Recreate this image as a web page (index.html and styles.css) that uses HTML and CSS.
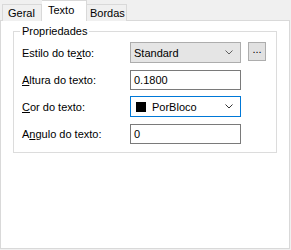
FILE: index.html
```html
<!DOCTYPE html>
<html lang="pt">
  <head>
    <meta charset="UTF-8" />
    <title>Propriedades do texto</title>
    <link rel="stylesheet" href="styles.css">
  </head>
  <body>
    <div class="tabs">
      <div class="tab">Geral</div>
      <div class="tab active">Texto</div>
      <div class="tab">Bordas</div>
    </div>
    <div class="panel">
      <fieldset class="group">
        <legend>Propriedades</legend>
        <div class="rows">
          <label class="lbl">Estilo do te<u>x</u>to:</label>
          <div class="combo">
            <span class="value">Standard</span>
            <svg class="chev" width="8" height="5" viewBox="0 0 8 5"><polyline points="0.5,0.5 4,4 7.5,0.5" fill="none" stroke="#606060" stroke-width="1"/></svg>
          </div>
          <div class="dots">...</div>

          <label class="lbl"><u>A</u>ltura do texto:</label>
          <div class="textbox">0.1800</div>
          <div></div>

          <label class="lbl"><u>C</u>or do texto:</label>
          <div class="combo color focus">
            <span class="swatch"></span>
            <span class="value">PorBloco</span>
            <svg class="chev" width="8" height="5" viewBox="0 0 8 5"><polyline points="0.5,0.5 4,4 7.5,0.5" fill="none" stroke="#333" stroke-width="1"/></svg>
          </div>
          <div></div>

          <label class="lbl">A<u>n</u>gulo do texto:</label>
          <div class="textbox">0</div>
          <div></div>
        </div>
      </fieldset>
    </div>
  </body>
</html>
```

FILE: styles.css
```css
body {
  margin: 0;
  width: 291px;
  height: 250px;
  background-color: #f0f0f0;
  font-family: "Liberation Sans", Arial, sans-serif;
  font-size: 11px;
  color: #000;
}

.tabs {
  display: flex;
  align-items: flex-end;
  height: 21px;
  padding-left: 2px;
}

.tab {
  flex: none;
  height: 17px;
  line-height: 16px;
  padding: 0 0 0 4px;
  border: 1px solid #d9d9d9;
  border-bottom: none;
  background-color: #f0f0f0;
  box-sizing: border-box;
  white-space: nowrap;
}
.tab:first-child {
  width: 40px;
  padding-left: 5px;
}
.tab:last-child {
  width: 40px;
  padding-left: 3px;
  border-left: none;
}
.tab.active {
  position: relative;
  height: 21px;
  width: 45px;
  padding-left: 6px;
  line-height: 18px;
  background-color: #fff;
  border-left: none;
  z-index: 1;
}

.panel {
  width: 290px;
  height: 229px;
  margin-top: -1px;
  box-sizing: border-box;
  border: 1px solid #d9d9d9;
  background-color: #fff;
  padding: 3px 12px 0 12px;
}

.group {
  margin: 0;
  border: 1px solid #dcdcdc;
  padding: 4px 8px 10px 8px;
  height: 129px;
  box-sizing: border-box;
}
.group legend {
  padding: 0 2px;
  margin-left: -2px;
  line-height: 14px;
}

.rows {
  display: grid;
  grid-template-columns: 101px 111px 18px;
  grid-auto-rows: 21px;
  column-gap: 7px;
  row-gap: 6px;
  align-items: center;
}

.lbl {
  white-space: nowrap;
}

.combo, .textbox {
  height: 21px;
  box-sizing: border-box;
  display: flex;
  align-items: center;
  padding-left: 3px;
}
.combo {
  background-color: #e5e5e5;
  border: 1px solid #adadad;
}
.combo .value {
  flex: 1;
}
.chev {
  margin-right: 7px;
}
.combo.color {
  background-color: #fff;
}
.combo.focus {
  border-color: #0078d7;
}
.swatch {
  width: 10px;
  height: 10px;
  margin: 0 6px 0 2px;
  background-color: #000;
}
.textbox {
  height: 20px;
  background-color: #fff;
  border: 1px solid #7a7a7a;
}

.dots {
  height: 17px;
  line-height: 12px;
  text-align: center;
  border: 1px solid #adadad;
  background-color: #e1e1e1;
  align-self: start;
}
```
